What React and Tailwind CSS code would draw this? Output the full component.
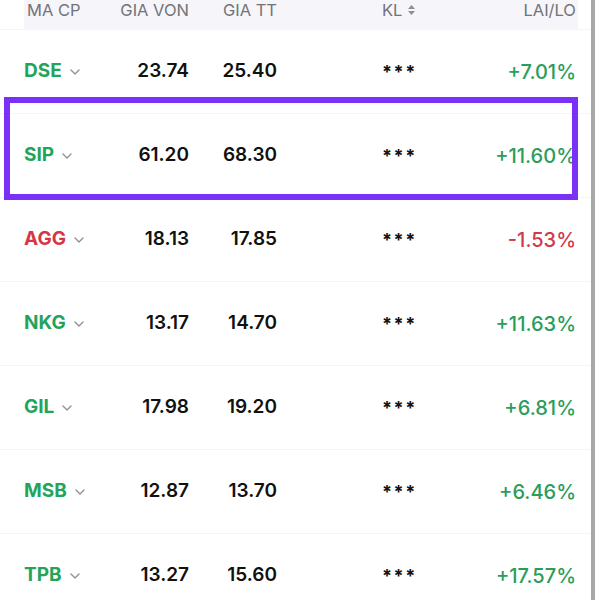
import React from 'react';

const rows = [
  { code: 'DSE', cost: '23.74', price: '25.40', pnl: '+7.01%', up: true },
  { code: 'SIP', cost: '61.20', price: '68.30', pnl: '+11.60%', up: true },
  { code: 'AGG', cost: '18.13', price: '17.85', pnl: '-1.53%', up: false },
  { code: 'NKG', cost: '13.17', price: '14.70', pnl: '+11.63%', up: true },
  { code: 'GIL', cost: '17.98', price: '19.20', pnl: '+6.81%', up: true },
  { code: 'MSB', cost: '12.87', price: '13.70', pnl: '+6.46%', up: true },
  { code: 'TPB', cost: '13.27', price: '15.60', pnl: '+17.57%', up: true },
];

const Chevron = () => (
  <svg width="10" height="6" viewBox="0 0 10 6" fill="none" className="ml-[8px] mt-[1px]">
    <path d="M1 1l4 4 4-4" stroke="#8e8e93" strokeWidth="1.3" strokeLinecap="round" strokeLinejoin="round" />
  </svg>
);

const SortIcon = () => (
  <svg width="9" height="12" viewBox="0 0 9 12" className="ml-[5px]">
    <path d="M4.5 1L8 5H1z" fill="#8e8e93" />
    <path d="M4.5 11L8 7H1z" fill="#8e8e93" />
  </svg>
);

const App = () => {
  return (
    <div
      className="flex w-[600px] h-[600px] bg-white overflow-hidden"
      style={{ fontFamily: 'Inter, "Noto Sans", sans-serif' }}
    >
      <div className="relative w-[591px] h-full">
        {/* Header */}
        <div className="ml-[24px] mr-[13px] h-[29px] bg-[#f5f5fa] flex items-start text-[16.5px] leading-[20px] text-[#737378]">
          <div className="w-[94px] pl-[3px]">MA CP</div>
          <div className="w-[71px] text-right">GIA VON</div>
          <div className="w-[88px] text-right">GIA TT</div>
          <div className="ml-[105px] flex items-center h-[20px]">
            KL
            <SortIcon />
          </div>
          <div className="flex-1 text-right pr-[2px]">LAI/LO</div>
        </div>

        {/* Rows */}
        {rows.map((r) => (
          <div
            key={r.code}
            className="h-[84px] pl-[24px] pr-[15px] flex items-center border-t border-[#f5f5f7]"
          >
            <div className="w-[94px] flex items-center">
              <span
                className={`text-[19px] font-bold ${r.up ? 'text-[#23a45a]' : 'text-[#d53645]'}`}
              >
                {r.code}
              </span>
              <Chevron />
            </div>
            <div className="w-[71px] text-right text-[19px] font-semibold text-[#111]">{r.cost}</div>
            <div className="w-[88px] text-right text-[19px] font-semibold text-[#111]">{r.price}</div>
            <div className="ml-[105px] text-[18px] font-bold text-[#111] tracking-[1.5px]">***</div>
            <div
              className={`flex-1 text-right text-[20px] font-medium ${r.up ? 'text-[#2a9d5c]' : 'text-[#d13a4a]'}`}
            >
              {r.pnl}
            </div>
          </div>
        ))}

        {/* Highlight box */}
        <div className="absolute left-[4px] top-[97px] w-[574px] h-[103px] border-[6px] border-[#7b2ff7]" />
      </div>
      <div className="w-[4px] h-full bg-[#a8a8a8]" />
      <div className="flex-1 bg-white" />
    </div>
  );
};

export default App;
